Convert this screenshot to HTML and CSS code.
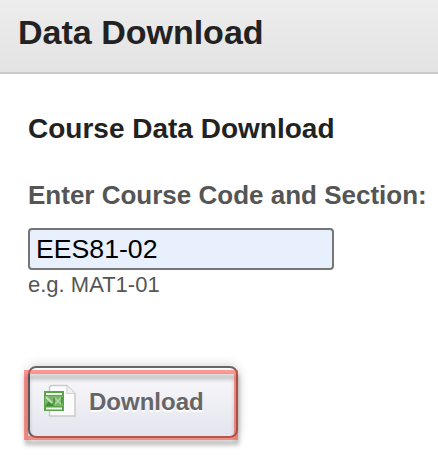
FILE: index.html
```html
<!DOCTYPE html>
<html lang="en">
<head>
    <meta charset="UTF-8">
    <meta name="viewport" content="width=device-width, initial-scale=1.0">
    <title>Data Download</title>
    <link rel="stylesheet" href="styles.css">
</head>
<body>

    <header class="page-header">
        <h1>Data Download</h1>
    </header>

    <main class="content">
        <h2>Course Data Download</h2>

        <form class="course-form">
            <label for="course">Enter Course Code and Section:</label>
            <input type="text" id="course" class="input-field" value="EES81-02">
            <p class="hint">e.g. MAT1-01</p>

            <div class="btn-wrap">
                <button type="button" class="btn">
                    <svg class="icon" width="34" height="34" viewBox="0 0 34 34">
                        <path d="M8 1.5H24L32 9.5V32H6.5V3Z" fill="#fbfbfc" stroke="#c8cacc" stroke-width="1.5"/>
                        <path d="M24 1.5V9.5H32" fill="#f0f0f2" stroke="#d0d2d4" stroke-width="1.2"/>
                        <rect x="1" y="7" width="20" height="20" fill="#5ba44c"/>
                        <path d="M3 10H19M3 24.5H19" stroke="#eef6ea" stroke-width="1.8"/>
                        <rect x="2" y="12" width="18" height="10" fill="#79b869"/>
                        <path d="M2 22L7 16L11 22Z" fill="#3f8d37"/>
                        <path d="M3 13L9 19" stroke="#c4e0ba" stroke-width="2"/>
                        <path d="M12 14L18 20M18 14L12 20" stroke="#b3d6a8" stroke-width="1.6"/>
                        <path d="M11 14V20M19 13V20" stroke="#4a953f" stroke-width="1.6"/>
                    </svg>
                    <span>Download</span>
                </button>
                <div class="highlight"></div>
            </div>
        </form>
    </main>

</body>
</html>
```
FILE: styles.css
```css
* {
    box-sizing: border-box;
    margin: 0;
    padding: 0;
    font-family: "Liberation Sans", Arial, sans-serif;
}

body {
    min-height: 100vh;
    background: #fff;
    color: #222;
}

.page-header {
    height: 74px;
    padding: 12px 18px 0;
    background: linear-gradient(#ededed, #e3e3e3);
    border-bottom: 2px solid #cacaca;
}

h1 {
    font-size: 34px;
    line-height: 40px;
}

.content {
    padding: 38px 0 10px 28px;
}

h2 {
    font-size: 28px;
    line-height: 34px;
    white-space: nowrap;
}

.course-form {
    margin-top: 34px;
    color: #555;
}

label {
    display: block;
    font-size: 26px;
    font-weight: bold;
    line-height: 30px;
    white-space: nowrap;
}

.input-field {
    display: block;
    width: 306px;
    height: 42px;
    margin-top: 18px;
    padding: 2px 6px;
    border: 2px solid #767676;
    border-radius: 4px;
    background: #e8f0fe;
    color: #000;
    font-size: 26.67px;
}

.hint {
    margin-top: 2px;
    font-size: 22px;
    line-height: 26px;
}

/* Download button */
.btn-wrap {
    position: relative;
    width: 210px;
    margin-top: 68px;
}

.btn {
    display: flex;
    align-items: center;
    gap: 12px;
    width: 210px;
    height: 72px;
    padding: 0 0 3px 13px;
    border: 2px solid #666;
    border-radius: 8px;
    background: linear-gradient(#fafafc, #e4e4ee);
    box-shadow: 0 0 12px rgba(0, 0, 0, 0.2);
    color: #666;
    font-size: 24px;
    font-weight: bold;
    text-shadow: 0 2px 0 #fff;
    cursor: pointer;
}

.btn span {
    padding-top: 2px;
}

.icon {
    flex: none;
}

/* Red frame over the button */
.highlight {
    position: absolute;
    top: 4px;
    left: -4px;
    width: 214px;
    height: 70px;
    border: 4px solid rgba(255, 70, 55, 0.53);
    filter: drop-shadow(1px 5px 2px rgba(0, 0, 0, 0.5));
    pointer-events: none;
}
```
